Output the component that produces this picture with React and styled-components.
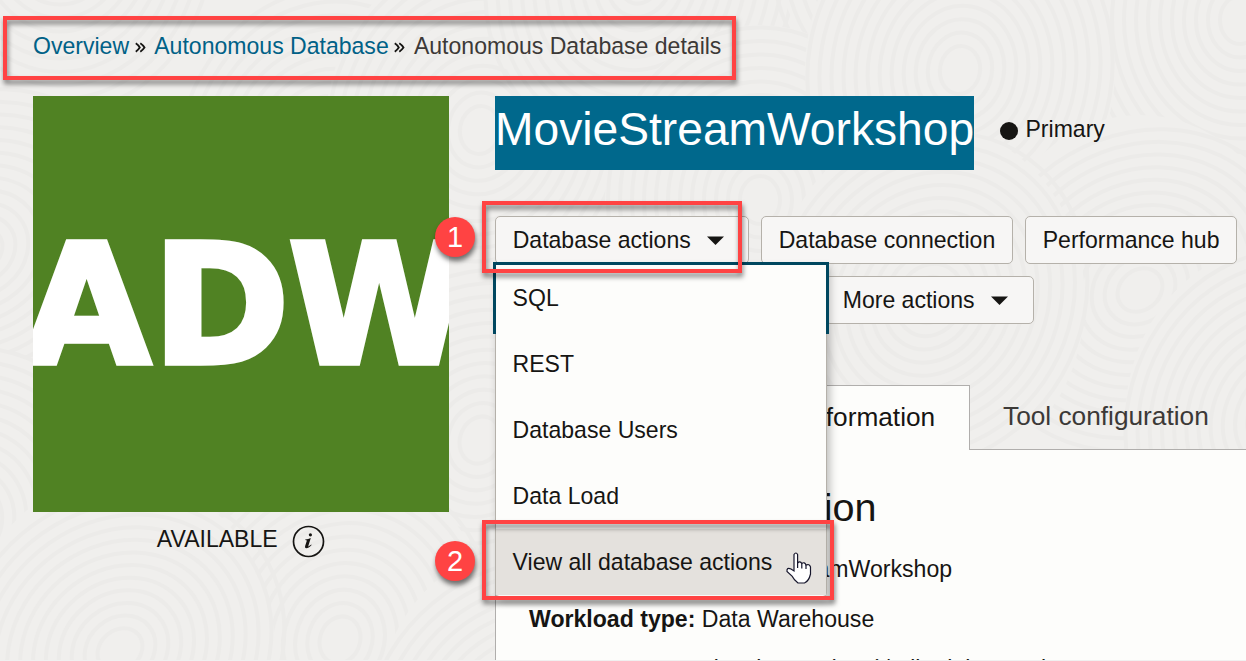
import React from "react";
import styled, { createGlobalStyle } from "styled-components";

const Global = createGlobalStyle`
  * { box-sizing: border-box; }
  body { margin: 0; background: #f0efed; color: #161513; font: 23.05px/26px "Liberation Sans", Arial, sans-serif; overflow: hidden; }
  h1, h2, p, ul { margin: 0; padding: 0; font-weight: 400; }
`;
const Page = styled.div`position: relative; width: 1246px; height: 661px; overflow: hidden; isolation: isolate;`;
const Texture = styled.svg`position: absolute; inset: 0; z-index: -1;`;
const BottomEdge = styled.div`position: absolute; left: 0; right: 0; bottom: 0; height: 1px; background: #f0f0f0;`;
const Breadcrumb = styled.nav`height: 96px; padding: 33px 0 0 33px; display: flex; align-items: flex-start; white-space: nowrap; color: #3c3937;`;
const Crumb = styled.a`color: #006187;`;
const Separator = styled.svg`margin: 9px 8.7px 0 5.5px; flex: none;`;
const Content = styled.main`display: grid; grid-template-columns: 416px 751px; column-gap: 46px; padding-left: 33px;`;
const Badge = styled.div`height: 416px; padding: 4px 0 0 11px; background: #508223; overflow: hidden; display: flex; justify-content: center; align-items: center; color: #fff; font: 700 165px/1 "DejaVu Sans", sans-serif; -webkit-text-stroke: 5.5px #fff; white-space: nowrap;`;
const WideLetter = styled.span`margin-left: ${(p) => p.$gap}px;`;
const Status = styled.div`display: flex; justify-content: center; gap: 14.5px; padding-top: 13px;`;
const StatusText = styled.span`padding-top: 1px;`;
const TitleRow = styled.div`display: flex; height: 74px;`;
const Title = styled.h1`background: #00688c; color: #fff; font-size: 46.2px; line-height: 66px; height: 74px; width: 479px; white-space: nowrap;`;
const Role = styled.div`display: flex; align-items: center; gap: 7.5px; height: 66px; margin-left: 26px;`;
const Dot = styled.i`width: 18px; height: 18px; border-radius: 50%; background: #161513; margin-top: 4px;`;
const ButtonRow = styled.div`display: flex; gap: 12px; margin-top: ${(p) => p.$top}px; padding-left: ${(p) => p.$indent || 0}px;`;
const Button = styled.button`height: 48px; width: ${(p) => p.$w}px; flex: none; display: flex; align-items: center; gap: 16px; padding: 0 16.7px; border: 1px solid #b5b1aa; border-radius: 5px; background: #f7f6f5; color: #161513; font: inherit; white-space: nowrap;`;
const Tabs = styled.div`display: flex; margin-top: 61px; height: 65px;`;
const Tab = styled.div`font-size: 26.25px; line-height: 62px; white-space: nowrap; border: solid #b0aeac; ${(p) => p.$active
  ? "width: 475px; padding-left: 35px; border-width: 1px 1px 0; background: #fdfdfb;"
  : "flex: 1; padding-left: 33px; border-width: 0 0 1px; color: #3c3937;"}`;
const Panel = styled.section`height: 211px; border-left: 1px solid #b0aeac; background: #fdfdfb; padding: 33px 0 0 33px; overflow: hidden;`;
const Heading = styled.h2`font-size: 39.6px; line-height: 48px; margin-bottom: 25px;`;
const Detail = styled.p`height: 50px; font-size: 23.1px; white-space: nowrap;`;
const Menu = styled.ul`position: absolute; left: 495px; top: 264px; width: 332px; height: 333px; background: #fdfdfb; border: 1px solid #b5b1aa; border-radius: 0 0 4px 4px; box-shadow: 3px 4px 8px rgba(0,0,0,.25); list-style: none;`;
const MenuItem = styled.li`height: 66px; line-height: 66px; padding-left: 16.6px; background: ${(p) => (p.$hover ? "#e4e1dd" : "transparent")};
  ${(p) => p.$focus && "box-shadow: 0 0 0 3px #00475f; position: relative; &::after { content: ''; position: absolute; left: 0; right: 0; top: 100%; height: 4px; background: #fdfdfb; }"}`;
const Callout = styled.div`position: absolute; left: ${(p) => p.$x}px; top: ${(p) => p.$y}px; width: ${(p) => p.$w}px; height: ${(p) => p.$h}px; border: 4px solid #ff4343; filter: drop-shadow(1px 4px 2.5px rgba(0,0,0,.5));`;
const Step = styled.div`position: absolute; left: 435px; top: ${(p) => p.$y}px; width: 40px; height: 40px; border-radius: 50%; background: #ff4343; color: #fff; font-size: 29px; line-height: 41px; text-align: center; box-shadow: 1px 4px 5px rgba(0,0,0,.55);`;
const Pointer = styled.svg`position: absolute; left: 785px; top: 551px;`;

const Caret = () => <svg width="17" height="9" viewBox="0 0 17 9"><path d="M0 .5H17L8.5 9Z" fill="#161513" /></svg>;
const Chevrons = () => (
  <Separator width="11" height="11" viewBox="0 0 11 11"><path d="M.8 1.3Q3.2 3 4.8 5.5Q3.2 8 .8 9.7M5.3 1.3Q7.8 3 9.5 5.5Q7.8 8 5.3 9.7" fill="none" stroke="#161513" strokeWidth="1.8" /></Separator>
);
const centers = [[60, -60], [330, 160], [-20, 250], [480, 130], [200, 400], [480, 440], [-30, 520], [340, 640], [120, 650], [530, 720], [640, -20], [930, -60], [760, 200], [1240, 20], [960, 70], [1140, 290], [930, 300], [1280, 420]];

export default function App() {
  return (
    <Page>
      <Global />
      <Texture width="1246" height="661">
        {centers.map(([x, y]) => (
          <g key={`${x},${y}`} stroke="#ecebe9" strokeWidth="4" fill="none">
            <ellipse cx={x} cy={y} rx="155" ry="175" fill="#f0efed" stroke="none" />
            {Array.from({ length: 12 }, (_, i) => (
              <ellipse key={i} cx={x} cy={y} rx={20 + i * 12} ry={24 + i * 13.5} transform={`rotate(${(x + y) % 60} ${x} ${y})`} />
            ))}
          </g>
        ))}
      </Texture>
      <Breadcrumb>
        <Crumb>Overview</Crumb><Chevrons /><Crumb>Autonomous Database</Crumb><Chevrons /><span>Autonomous Database details</span>
      </Breadcrumb>
      <Content>
        <div>
          <Badge><span>A<WideLetter $gap={2}>D</WideLetter><WideLetter $gap={-1}>W</WideLetter></span></Badge>
          <Status>
            <StatusText>AVAILABLE</StatusText>
            <svg width="33" height="33" viewBox="0 0 33 33">
              <circle cx="16.5" cy="16.5" r="15" fill="none" stroke="#161513" strokeWidth="1.7" />
              <path d="M13.3 14.4C15.5 14.1 17 13.6 18.8 12.9L16.3 21C16.1 21.9 17.2 21.3 19.2 19.6L19.6 20C17.5 22.5 15.8 23.2 14.4 23.2C13 23.2 12.8 22.1 13.2 20.8L14.9 15.4L13.2 15Z" fill="#161513" />
              <circle cx="18.4" cy="9.8" r="1.6" fill="#161513" />
            </svg>
          </Status>
        </div>
        <div>
          <TitleRow>
            <Title>MovieStreamWorkshop</Title>
            <Role><Dot /><span>Primary</span></Role>
          </TitleRow>
          <ButtonRow $top={46}>
            <Button $w={254}>Database actions <Caret /></Button>
            <Button $w={252}>Database connection</Button>
            <Button $w={212}>Performance hub</Button>
          </ButtonRow>
          <ButtonRow $top={12} $indent={330}>
            <Button $w={209}>More actions <Caret /></Button>
          </ButtonRow>
          <Tabs><Tab $active>Autonomous Database information</Tab><Tab>Tool configuration</Tab></Tabs>
          <Panel>
            <Heading>General information</Heading>
            <Detail><b>Database name:</b> MovieStreamWorkshop</Detail>
            <Detail><b>Workload type:</b> Data Warehouse</Detail>
            <Detail><b>Compartment:</b> adwork-area (root)/adbs-labs-movie-tenancy</Detail>
          </Panel>
        </div>
      </Content>
      <Menu>
        <MenuItem $focus>SQL</MenuItem>
        <MenuItem>REST</MenuItem>
        <MenuItem>Database Users</MenuItem>
        <MenuItem>Data Load</MenuItem>
        <MenuItem $hover>View all database actions</MenuItem>
      </Menu>
      <Callout $x={3} $y={16} $w={733} $h={64} />
      <Callout $x={482} $y={201} $w={260} $h={72} />
      <Callout $x={482} $y={520} $w={352} $h={80} />
      <Step $y={217}>1</Step>
      <Step $y={541}>2</Step>
      <Pointer width="28" height="34" viewBox="0 0 28 34">
        <path d="M9 3.5Q11 .5 12.6 3.5V12Q15 9.5 16.8 12.5Q19.5 10.5 21 14Q24.5 12.5 25.5 16V23Q24 30 19.5 32H13Q9 29 7 25L2 20.5Q1.5 16 6 18L9 20Z" fill="#fff" stroke="#15152b" strokeWidth="1.2" />
        <path d="M12.6 11V17M16.8 12.5V17.5M21 14V18" stroke="#15152b" strokeWidth="1.2" />
      </Pointer>
      <BottomEdge />
    </Page>
  );
}
